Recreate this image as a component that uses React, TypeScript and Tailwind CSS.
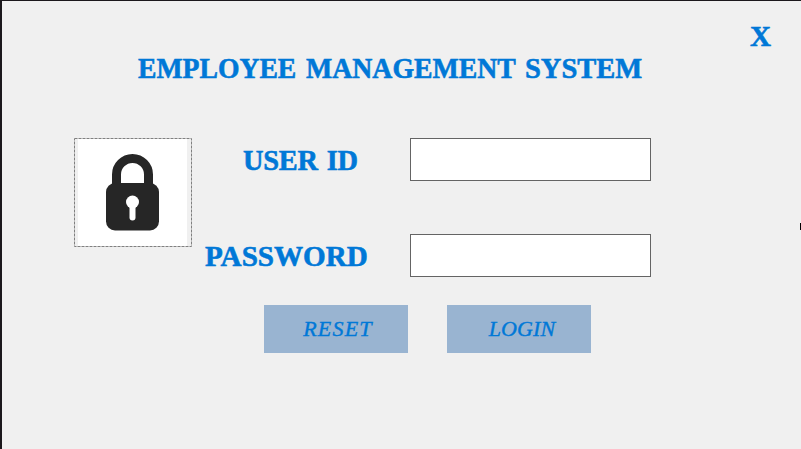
import type { ReactNode } from "react";

function Caption({ children, className }: { children: ReactNode; className: string }) {
  return (
    <span className={`block h-8 origin-left text-[30px] leading-8 font-bold whitespace-pre text-[#0078d7] [-webkit-text-stroke:0.6px_#0078d7] ${className}`}>
      {children}
    </span>
  );
}

function LockPicture() {
  return (
    <svg width="118" height="109" viewBox="0 0 118 109" className="block" aria-hidden="true">
      <rect x="4" y="1" width="109" height="107" fill="#fff" />
      <rect x="0.5" y="0.5" width="117" height="108" fill="none" stroke="#808080" strokeDasharray="3 1" />
      <path d="M42.5 48V36.5a16 16 0 0 1 32 0V48" fill="none" stroke="#262626" strokeWidth="9" />
      <rect x="32" y="45" width="53" height="47.5" rx="9" fill="#262626" />
      <circle cx="58.5" cy="64" r="6.5" fill="#fff" />
      <path d="M58.5 65V79.5" stroke="#fff" strokeWidth="6" strokeLinecap="round" />
    </svg>
  );
}

const inputClass = "block h-[43px] w-[241px] border border-[#646464] bg-white px-2 text-xl outline-none";
const buttonClass =
  "h-12 w-36 bg-[#99b4d1] pb-0.5 text-center text-[22px] italic text-[#0078d7] [-webkit-text-stroke:0.4px_#0078d7]";

export default function App() {
  return (
    <main className="relative h-[449px] w-[801px] overflow-hidden border-t border-l-2 border-[#1b181c] bg-[#f0f0f0] font-['Liberation_Serif',serif]">
      <header className="flex h-[137px] items-start pl-[136px]">
        <h1 className="flex w-[612px] pt-[51px]">
          <span className="w-[168px]"><Caption className="scale-x-[0.922]">EMPLOYEE </Caption></span>
          <span className="w-[219px]"><Caption className="scale-x-[0.926]">MANAGEMENT </Caption></span>
          <span><Caption className="scale-x-[0.95]">SYSTEM</Caption></span>
        </h1>
        <button type="button" className="pt-[19px]">
          <Caption className="scale-x-[0.97]">X</Caption>
        </button>
      </header>
      <form onSubmit={(event) => event.preventDefault()}>
        <div className="flex pl-[72px]">
          <LockPicture />
          <div className="flex flex-col gap-[53px] pl-[13px]">
            <label className="flex">
              <span className="w-[205px] pt-[6px] pl-[38px]"><Caption className="scale-x-[0.945] [word-spacing:2px] tracking-[-0.2px]">USER ID</Caption></span>
              <input aria-label="User ID" className={inputClass} />
            </label>
            <label className="flex">
              <span className="w-[205px] pt-[6px]"><Caption className="scale-x-[0.97]">PASSWORD</Caption></span>
              <input type="password" aria-label="Password" className={inputClass} />
            </label>
          </div>
        </div>
        <div className="flex gap-[39px] pt-7 pl-[262px]">
          <button type="button" className={`${buttonClass} pl-1 tracking-[1.2px]`}>RESET</button>
          <button type="submit" className={`${buttonClass} pl-1.5 tracking-[0.1px]`}>LOGIN</button>
        </div>
      </form>
      <span className="absolute top-[222px] right-0 h-[7px] w-px bg-black" />
    </main>
  );
}
